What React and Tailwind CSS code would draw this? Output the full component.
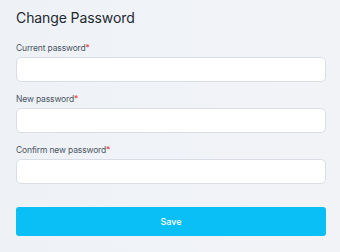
import React from 'react';

const Field = ({ label }) => (
  <div className="flex flex-col">
    <label className="text-[8.5px] leading-[12px] tracking-[-0.15px] text-[#4b5563] mb-[3px]">
      {label}
      <span className="text-[#ef4444]">*</span>
    </label>
    <input
      type="password"
      className="h-[25px] w-full rounded-[5px] border border-[#d9dee6] bg-white px-2 text-[10px] outline-none"
    />
  </div>
);

const App = () => {
  return (
    <div
      className="w-[340px] h-[252px] bg-gradient-to-r from-[#eef2f7] to-[#f2f3f7] px-4 pt-2"
      style={{ fontFamily: 'Inter, "Noto Sans", sans-serif' }}
    >
      <h1 className="text-[14px] leading-[20px] tracking-[-0.1px] text-[#222831] mb-[14px]">Change Password</h1>
      <div className="flex flex-col gap-[11px] w-[310px]">
        <Field label="Current password" />
        <Field label="New password" />
        <Field label="Confirm new password" />
      </div>
      <button className="mt-[23px] h-[29px] w-[310px] rounded-[3px] bg-[#0abef6] text-[9px] font-medium text-white">
        Save
      </button>
    </div>
  );
};

export default App;
